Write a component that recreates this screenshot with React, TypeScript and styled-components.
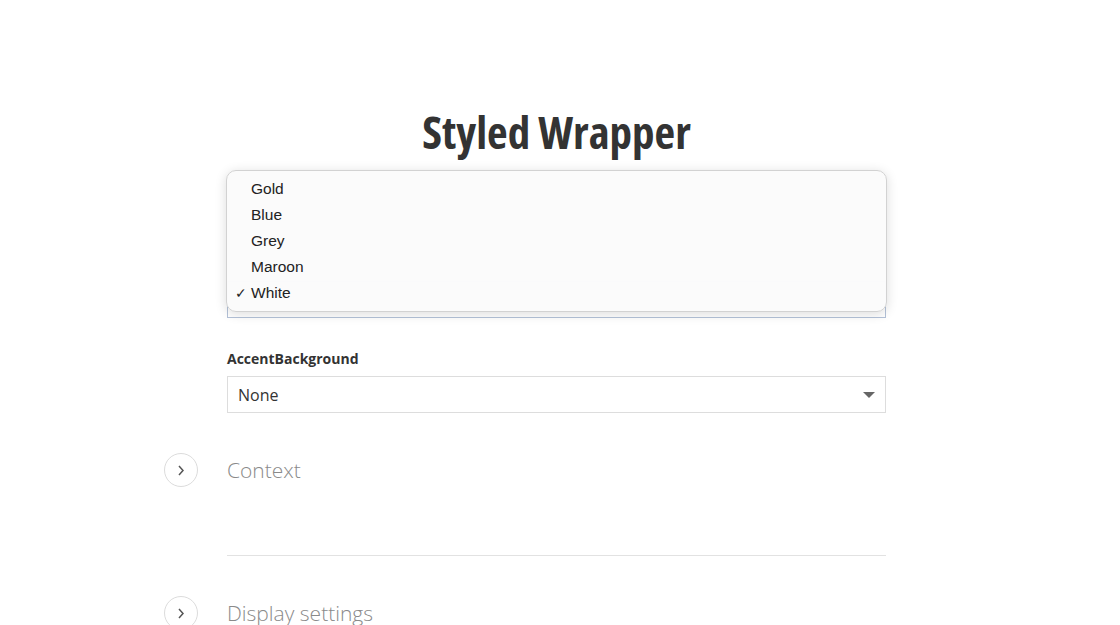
import styled, { createGlobalStyle } from "styled-components";

const GlobalStyle = createGlobalStyle`
  html, body {
    margin: 0;
    padding: 0;
    background: #ffffff;
    font-family: "Open Sans", "Liberation Sans", sans-serif;
    color: #333333;
  }
`;

const Page = styled.main`
  width: 1120px;
  height: 625px;
  overflow: hidden;
  padding-left: 227px;
  box-sizing: border-box;
`;

const Column = styled.div`
  width: 659px;
  display: flex;
  flex-direction: column;
`;

const Title = styled.h1`
  margin: 106px 0 0;
  font-size: 45px;
  line-height: 52px;
  font-weight: 700;
  font-stretch: 75%;
  text-align: center;
  color: #333333;
`;

const Fields = styled.div`
  display: flex;
  flex-direction: column;
  gap: 31px;
`;

const Field = styled.div`
  position: relative;
  display: flex;
  flex-direction: column;
  gap: 7px;
`;

const Label = styled.label`
  font-size: 14px;
  line-height: 20px;
  font-weight: 700;
  color: #333333;
`;

const SelectBox = styled.div<{ $focused?: boolean; $offset?: number }>`
  height: 37px;
  margin-top: ${(p) => p.$offset ?? 0}px;
  box-sizing: border-box;
  border: 1px solid ${(p) => (p.$focused ? "#b4c2d8" : "#dddddd")};
  background: #ffffff;
  display: flex;
  align-items: center;
  justify-content: space-between;
  padding: 0 10px;
  font-size: 16px;
  color: #333333;
`;

const Caret = styled.span`
  width: 0;
  height: 0;
  border-left: 6px solid transparent;
  border-right: 6px solid transparent;
  border-top: 6px solid #666666;
`;

const Menu = styled.ul`
  position: absolute;
  top: 12px;
  left: -1px;
  right: -1px;
  height: 142px;
  margin: 0;
  padding: 5px 0 0;
  list-style: none;
  box-sizing: border-box;
  background: rgba(251, 251, 251, 0.98);
  border: 1px solid #d2d2d2;
  border-radius: 10px;
  box-shadow: 0 2px 12px rgba(0, 0, 0, 0.14);
  font-family: "Liberation Sans", Arial, sans-serif;
  z-index: 2;
`;

const MenuItem = styled.li`
  position: relative;
  height: 26px;
  line-height: 26px;
  padding-left: 24px;
  font-size: 15.5px;
  color: #222222;
`;

const Check = styled.span`
  position: absolute;
  left: 8px;
  top: 0;
  font-size: 14px;
`;

const Section = styled.section<{ $first?: boolean }>`
  padding: ${(p) => (p.$first ? "40px" : "40px")} 0 68px;
  border-bottom: 1px solid #e2e2e2;
`;

const SectionHeader = styled.div`
  display: flex;
  align-items: center;
  gap: 29px;
  margin-left: -63px;
  height: 34px;
`;

const ToggleCircle = styled.button`
  width: 34px;
  height: 34px;
  border-radius: 50%;
  border: 1px solid #dcdcdc;
  background: #ffffff;
  display: flex;
  align-items: center;
  justify-content: center;
  padding: 0;
  flex-shrink: 0;
`;

const SectionTitle = styled.h2`
  margin: 0;
  font-size: 21px;
  font-weight: 300;
  color: #8a8a8a;
  line-height: 34px;
`;

const Chevron = () => (
  <svg width="10" height="14" viewBox="0 0 10 14">
    <path d="M3 3 L7 7.5 L3 12" fill="none" stroke="#555" strokeWidth="1.5" />
  </svg>
);

const colors = ["Gold", "Blue", "Grey", "Maroon", "White"];

export default function App() {
  return (
    <Page>
      <GlobalStyle />
      <Column>
        <Title>Styled Wrapper</Title>
        <Fields>
          <Field>
            <SelectBox $focused $offset={123} />
            <Menu>
              {colors.map((c) => (
                <MenuItem key={c}>
                  {c === "White" && <Check>✓</Check>}
                  {c}
                </MenuItem>
              ))}
            </Menu>
          </Field>
          <Field>
            <Label>AccentBackground</Label>
            <SelectBox>
              None
              <Caret />
            </SelectBox>
          </Field>
        </Fields>
        <Section $first>
          <SectionHeader>
            <ToggleCircle>
              <Chevron />
            </ToggleCircle>
            <SectionTitle>Context</SectionTitle>
          </SectionHeader>
        </Section>
        <Section>
          <SectionHeader>
            <ToggleCircle>
              <Chevron />
            </ToggleCircle>
            <SectionTitle>Display settings</SectionTitle>
          </SectionHeader>
        </Section>
      </Column>
    </Page>
  );
}
